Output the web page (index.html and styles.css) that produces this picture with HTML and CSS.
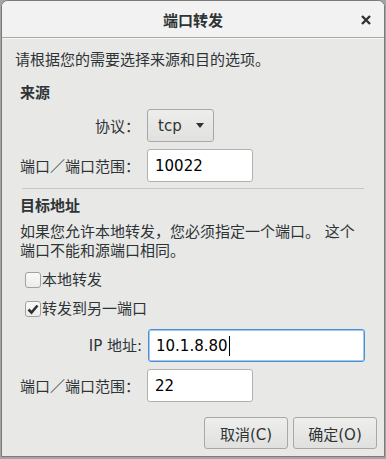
FILE: index.html
```html
<!DOCTYPE html>
<html>
  <head>
    <meta charset="utf-8" />
    <link rel="stylesheet" href="styles.css">
  </head>
  <body>
    <div class="dialog">
      <header class="titlebar">
        <span class="title">端口转发</span>
        <svg class="close" width="12" height="12" viewBox="0 0 12 12">
          <path d="M2 2 L10 10 M10 2 L2 10" stroke="#2e3436" stroke-width="2.4" />
        </svg>
      </header>
      <div class="content">
        <p class="intro">请根据您的需要选择来源和目的选项。</p>

        <section class="group">
          <h2>来源</h2>
          <div class="form">
            <label class="cjk">协议：</label>
            <div class="combo">
              <span>tcp</span>
              <span class="arrow"></span>
            </div>
            <label class="cjk">端口／端口范围：</label>
            <div class="entry short">10022</div>
          </div>
        </section>

        <hr class="sep" />

        <section class="group">
          <h2 class="second">目标地址</h2>
          <p class="hint">如果您允许本地转发，您必须指定一个端口。 这个<br />端口不能和源端口相同。</p>
          <div class="check"><span class="box"></span>本地转发</div>
          <div class="check">
            <span class="box">
              <svg width="14" height="14" viewBox="0 0 14 14">
                <path d="M2.5 7.5 L5.5 10.5 L11.5 3.5" fill="none" stroke="#2e3436" stroke-width="2.6" />
              </svg>
            </span>转发到另一端口
          </div>
          <div class="form dest">
            <label class="ip">IP 地址:</label>
            <div class="entry wide focus">10.1.8.80<span class="caret"></span></div>
            <label class="cjk">端口／端口范围：</label>
            <div class="entry short">22</div>
          </div>
        </section>

        <div class="actions">
          <button>取消(C)</button>
          <button>确定(O)</button>
        </div>
      </div>
    </div>
  </body>
</html>
```

FILE: styles.css
```css
* {
  margin: 0;
  padding: 0;
  box-sizing: border-box;
}

body {
  width: 386px;
  height: 459px;
  background-color: #a4a4a4;
  font-family: 'DejaVu Sans', 'Noto Sans CJK SC', sans-serif;
  font-size: 15px;
  color: #2e3436;
  overflow: hidden;
}

.dialog {
  margin-left: 1px;
  width: 384px;
  height: 457px;
  border: 1px solid #7b7b7b;
  border-radius: 7px 7px 0 0;
  background-color: #e8e8e7;
  overflow: hidden;
}

.titlebar {
  height: 37px;
  display: flex;
  align-items: center;
  justify-content: center;
  position: relative;
  background-color: #f2f2f2;
  border-bottom: 1px solid #a9a9a7;
  box-shadow: 0 1px 0 #f6f6f6;
}

.title {
  font-family: 'Noto Sans CJK SC', sans-serif;
  font-weight: bold;
  font-size: 15px;
}

.close {
  position: absolute;
  right: 12px;
  top: 13px;
}

.content {
  padding: 12px 0 0 0;
  line-height: 20px;
}

.intro {
  padding-left: 13px;
}

.group {
  padding: 0 18px;
}

h2 {
  font-size: 15px;
  font-weight: bold;
  margin-top: 13px;
}

h2.second {
  margin-top: 7px;
}

.form {
  display: grid;
  grid-template-columns: 120px auto;
  column-gap: 7px;
  row-gap: 7px;
  align-items: center;
  justify-items: start;
  margin-top: 6px;
}

.form label {
  justify-self: end;
  color: #2e3436;
}

.cjk {
  font-family: 'Noto Sans CJK SC', sans-serif;
}

.form label.ip {
  margin-right: -2px;
}

.combo {
  width: 67px;
  height: 33px;
  display: flex;
  align-items: center;
  padding-left: 10px;
  border: 1px solid #a8a8a6;
  border-radius: 3px;
  background: linear-gradient(#ededec, #e1e1df);
}

.arrow {
  margin-left: 14px;
  width: 0;
  height: 0;
  border-left: 4.5px solid transparent;
  border-right: 4.5px solid transparent;
  border-top: 5px solid #2e3436;
}

.entry {
  height: 33px;
  display: flex;
  align-items: center;
  padding-left: 7px;
  background-color: #fff;
  border: 1px solid #b0b0ae;
  border-radius: 3px;
  color: #000;
}

.short {
  width: 106px;
}

.wide {
  width: 217px;
  margin-left: 1px;
}

.focus {
  border: 1px solid #4a90d9;
  box-shadow: inset 0 0 0 1px #a7c6ec;
}

.caret {
  width: 1px;
  height: 20px;
  margin-left: 1px;
  background-color: #000;
}

.sep {
  border: none;
  border-top: 1px solid #c6c6c4;
  margin: 6px 20px 0 20px;
}

.hint {
  margin-top: 7px;
  line-height: 19px;
}

.check {
  display: flex;
  align-items: center;
  height: 24px;
  margin-top: 5px;
  padding-left: 5px;
}

.hint + .check {
  margin-top: 7px;
}

.box {
  width: 16px;
  height: 16px;
  margin-right: 1px;
  display: flex;
  align-items: center;
  justify-content: center;
  border: 1px solid #a1a1a0;
  border-radius: 3px;
  background: linear-gradient(#fafafa, #ececeb);
}

.dest {
  margin-top: 8px;
}

.actions {
  display: flex;
  justify-content: flex-end;
  gap: 5px;
  padding: 15px 7px 0 0;
}

button {
  width: 84px;
  height: 32px;
  font-family: 'DejaVu Sans', 'Noto Sans CJK SC', sans-serif;
  font-size: 15px;
  color: #2e3436;
  border: 1px solid #a8a8a6;
  border-radius: 3px;
  background: linear-gradient(#eeeeed, #e0e0de);
}
```
